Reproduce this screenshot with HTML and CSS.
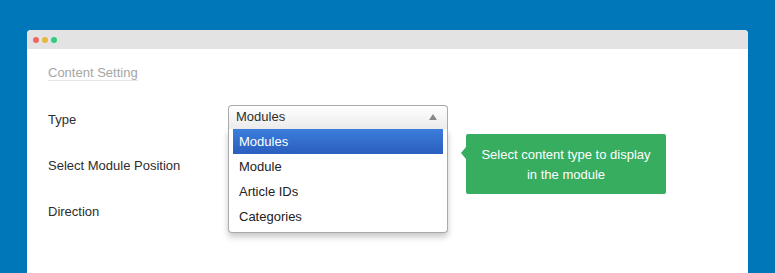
FILE: index.html
```html
<!DOCTYPE html>
<html lang="en">
<head>
    <meta charset="UTF-8">
    <meta name="viewport" content="width=device-width, initial-scale=1.0">
    <title>Content Setting</title>
    <link rel="stylesheet" href="styles.css">
</head>
<body>
    <div class="window">
        <div class="titlebar">
            <span class="dot red"></span>
            <span class="dot yellow"></span>
            <span class="dot green"></span>
        </div>

        <div class="content">
            <div class="section-title">Content Setting</div>

            <div class="row">
                <label>Type</label>
                <div class="select">
                    <div class="select-head">
                        Modules
                        <span class="caret"></span>
                    </div>
                    <ul class="select-list">
                        <li class="active">Modules</li>
                        <li>Module</li>
                        <li>Article IDs</li>
                        <li>Categories</li>
                    </ul>
                </div>
            </div>

            <div class="row">
                <label>Select Module Position</label>
            </div>

            <div class="row">
                <label>Direction</label>
            </div>
        </div>

        <div class="tooltip">Select content type to display in the module</div>
    </div>
</body>
</html>
```

FILE: styles.css
```css
html, body {
    margin: 0;
    height: 100%;
    overflow: hidden;
}
body {
    font-family: "Liberation Sans", Arial, sans-serif;
    font-size: 13px;
    background: #0077b8;
    color: #2e2e2e;
    padding: 30px 0 0 27px;
    box-sizing: border-box;
}
.window {
    position: relative;
    width: 721px;
    height: 243px;
    background: #fff;
    border-radius: 4px 4px 0 0;
}
.titlebar {
    height: 19px;
    background: #e3e3e3;
    border-radius: 4px 4px 0 0;
    display: flex;
    align-items: center;
    gap: 3px;
    padding-left: 6px;
}
.dot {
    width: 6px;
    height: 6px;
    border-radius: 50%;
}
.dot.red { background: #ec6868; }
.dot.yellow { background: #e5b93c; }
.dot.green { background: #2fcd7c; }

.content {
    padding: 16px 21px 0;
}
.section-title {
    display: inline-block;
    color: #a5a5a5;
    line-height: 15px;
    border-bottom: 1px solid #e6e6e6;
    margin-bottom: 15px;
}
.row {
    display: grid;
    grid-template-columns: 180px 220px;
    height: 46px;
}
.row label {
    line-height: 47px;
}
.select {
    position: relative;
    margin-top: 9px;
    z-index: 2;
}
.select-head {
    position: relative;
    height: 23px;
    line-height: 22px;
    padding-left: 7px;
    border: 1px solid #aaa;
    border-bottom: none;
    border-radius: 4px 4px 0 0;
    background: linear-gradient(#fff, #ebebeb);
}
.caret {
    position: absolute;
    right: 10px;
    top: 8px;
    border-left: 4px solid transparent;
    border-right: 4px solid transparent;
    border-bottom: 6px solid #888;
}
.select-list {
    list-style: none;
    margin: 0;
    padding: 0 4px 3px;
    background: #fff;
    border: 1px solid #aaa;
    border-top: none;
    border-radius: 0 0 4px 4px;
    box-shadow: 0 4px 6px rgba(0, 0, 0, 0.22);
}
.select-list li {
    height: 25px;
    line-height: 25px;
    padding-left: 6px;
    color: #222;
}
.select-list li.active {
    background: linear-gradient(#3c7ddb, #2a5ebf);
    color: #fff;
}
.tooltip {
    position: absolute;
    left: 439px;
    top: 104px;
    width: 200px;
    box-sizing: border-box;
    padding: 11px 10px 9px;
    background: #37ad5f;
    color: #fff;
    text-align: center;
    line-height: 20px;
    border-radius: 2px;
}
.tooltip::before {
    content: "";
    position: absolute;
    left: -5px;
    top: 13px;
    border-top: 6px solid transparent;
    border-bottom: 6px solid transparent;
    border-right: 5px solid #37ad5f;
}
```
